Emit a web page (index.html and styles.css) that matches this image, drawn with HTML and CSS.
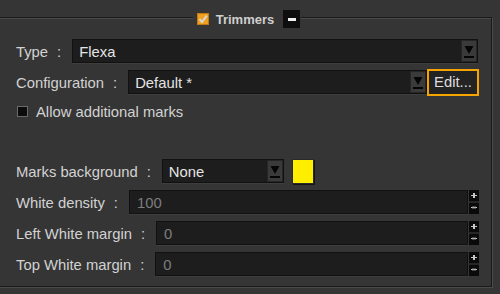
FILE: index.html
```html
<!DOCTYPE html>
<html>
<head>
<meta charset="utf-8">
<link rel="stylesheet" href="styles.css">
</head>
<body>
<div class="frame">
  <div class="legend">
    <span class="tcheck">
      <svg width="12" height="12" viewBox="0 0 12 12"><rect x="0" y="0" width="12" height="12" fill="#f0a020"/><rect x="0.5" y="0.5" width="11" height="11" fill="none" stroke="#c07a10"/><path d="M2.5 6.2 L5 9 L9.8 2.6" fill="none" stroke="#d8d8d8" stroke-width="2"/></svg>
    </span>
    <span class="ttl">Trimmers</span>
    <span class="minus"><span class="bar"></span></span>
  </div>

  <div class="row r-type">
    <span class="lbl">Type</span><span class="colon">:</span>
    <div class="combo grow"><span class="val">Flexa</span><span class="dd"><svg width="14" height="20" viewBox="0 0 14 20"><path d="M2.5 5 L11.5 5 L7 13 Z" fill="#050505"/><rect x="2" y="15" width="10" height="2" fill="#050505"/></svg></span></div>
  </div>

  <div class="row r-conf">
    <span class="lbl">Configuration</span><span class="colon">:</span>
    <div class="combo grow"><span class="val">Default *</span><span class="dd"><svg width="14" height="20" viewBox="0 0 14 20"><path d="M2.5 5 L11.5 5 L7 13 Z" fill="#050505"/><rect x="2" y="15" width="10" height="2" fill="#050505"/></svg></span></div>
    <button class="edit">Edit...</button>
  </div>

  <div class="row r-chk">
    <span class="cbox"></span><span class="lbl">Allow additional marks</span>
  </div>

  <div class="row r-marks">
    <span class="lbl">Marks background</span><span class="colon">:</span>
    <div class="combo small"><span class="val">None</span><span class="dd"><svg width="14" height="20" viewBox="0 0 14 20"><path d="M2.5 5 L11.5 5 L7 13 Z" fill="#050505"/><rect x="2" y="15" width="10" height="2" fill="#050505"/></svg></span></div>
    <span class="swatch"></span>
  </div>

  <div class="row">
    <span class="lbl">White density</span><span class="colon">:</span>
    <div class="input grow"><span class="num">100</span></div>
    <span class="spin"><svg width="10" height="24" viewBox="0 0 10 24"><rect width="10" height="11" fill="#0a0a0a"/><rect y="13" width="10" height="11" fill="#0a0a0a"/><rect y="11" width="10" height="2" fill="#262626"/><rect x="2" y="5" width="6" height="1" fill="#c8c8c8"/><rect x="4" y="3" width="2" height="5" fill="#c8c8c8"/><rect x="2" y="17" width="6" height="1" fill="#c8c8c8"/><rect x="3" y="16" width="4" height="3" fill="#8a8a8a" opacity="0.5"/></svg></span>
  </div>

  <div class="row">
    <span class="lbl">Left White margin</span><span class="colon">:</span>
    <div class="input grow"><span class="num">0</span></div>
    <span class="spin"><svg width="10" height="24" viewBox="0 0 10 24"><rect width="10" height="11" fill="#0a0a0a"/><rect y="13" width="10" height="11" fill="#0a0a0a"/><rect y="11" width="10" height="2" fill="#262626"/><rect x="2" y="5" width="6" height="1" fill="#c8c8c8"/><rect x="4" y="3" width="2" height="5" fill="#c8c8c8"/><rect x="2" y="17" width="6" height="1" fill="#c8c8c8"/><rect x="3" y="16" width="4" height="3" fill="#8a8a8a" opacity="0.5"/></svg></span>
  </div>

  <div class="row">
    <span class="lbl">Top White margin</span><span class="colon">:</span>
    <div class="input grow"><span class="num">0</span></div>
    <span class="spin"><svg width="10" height="24" viewBox="0 0 10 24"><rect width="10" height="11" fill="#0a0a0a"/><rect y="13" width="10" height="11" fill="#0a0a0a"/><rect y="11" width="10" height="2" fill="#262626"/><rect x="2" y="5" width="6" height="1" fill="#c8c8c8"/><rect x="4" y="3" width="2" height="5" fill="#c8c8c8"/><rect x="2" y="17" width="6" height="1" fill="#c8c8c8"/><rect x="3" y="16" width="4" height="3" fill="#8a8a8a" opacity="0.5"/></svg></span>
  </div>
</div>
</body>
</html>
```

FILE: styles.css
```css
html, body {
  margin: 0;
  padding: 0;
  background: #353535;
  width: 500px;
  height: 294px;
  overflow: hidden;
  font-family: "Liberation Sans", Arial, sans-serif;
  font-size: 14.8px;
  color: #d2d2d2;
}

.frame {
  margin: 17px 8px 0 -2px;
  height: 268px;
  border: 1px solid #1a1a1a;
  box-shadow: inset 1px 1px 0 #4a4a4a, 1px 1px 0 #4a4a4a;
  padding: 0 13px 0 17px;
  display: flex;
  flex-direction: column;
}

.legend {
  align-self: center;
  margin-top: -8px;
  height: 18px;
  display: flex;
  align-items: center;
  background: #353535;
  padding: 0 1px 0 4px;
}

.tcheck { display: flex; width: 12px; height: 12px; }
.ttl {
  margin-left: 7px;
  font-weight: bold;
  font-size: 13px;
  color: #cfcfcf;
}
.minus {
  margin-left: 9px;
  width: 17px;
  height: 18px;
  background: #0e0e0e;
  display: flex;
  align-items: center;
  justify-content: center;
}
.minus .bar { width: 8px; height: 3px; background: #f0f0f0; }

.row {
  height: 24px;
  display: flex;
  align-items: center;
  margin-top: 7px;
}
.r-type { margin-top: 11px; }
.r-chk { height: 20px; }
.r-marks { margin-top: 38px; }

.lbl { white-space: nowrap; padding-top: 1px; }
.colon { margin: 0 11px 0 9px; padding-top: 1px; }

.grow { flex: 1; }

.combo {
  height: 24px;
  box-sizing: border-box;
  background: #1d1d1d;
  border: 1px solid #111;
  box-shadow: 0 1px 0 #3e3e3e;
  display: flex;
  align-items: center;
  padding-left: 6px;
}
.combo .val { flex: 1; color: #e4e4e4; padding-top: 1px; }
.dd {
  width: 16px;
  height: 22px;
  box-sizing: border-box;
  background: #3a3a3a;
  border: 1px solid #262626;
  display: flex;
  align-items: center;
  justify-content: center;
}
.combo.small { width: 122px; }

.edit {
  width: 52px;
  height: 27px;
  margin-right: -1px;
  box-sizing: border-box;
  border: 2px solid #f5a300;
  background: #232323;
  color: #dedede;
  font-family: "Liberation Sans", Arial, sans-serif;
  font-size: 14.8px;
  padding: 0;
}

.cbox {
  width: 11px;
  height: 11px;
  box-sizing: border-box;
  background: #0c0c0c;
  border: 1px solid #6a6a6a;
  margin: 0 8px 0 1px;
}

.swatch {
  margin-left: 8px;
  width: 22px;
  height: 25px;
  box-sizing: border-box;
  background: #ffee00;
  border: 1px solid #2a2a2a;
  box-shadow: 1px 1px 0 #151515;
}

.input {
  height: 24px;
  box-sizing: border-box;
  background: #1d1d1d;
  border: 1px solid #111;
  box-shadow: 0 1px 0 #3e3e3e;
  display: flex;
  align-items: center;
  padding-left: 7px;
}
.num { color: #7e7e7e; padding-top: 1px; }

.spin {
  display: flex;
  margin-left: 1px;
  margin-right: -1px;
}
```
